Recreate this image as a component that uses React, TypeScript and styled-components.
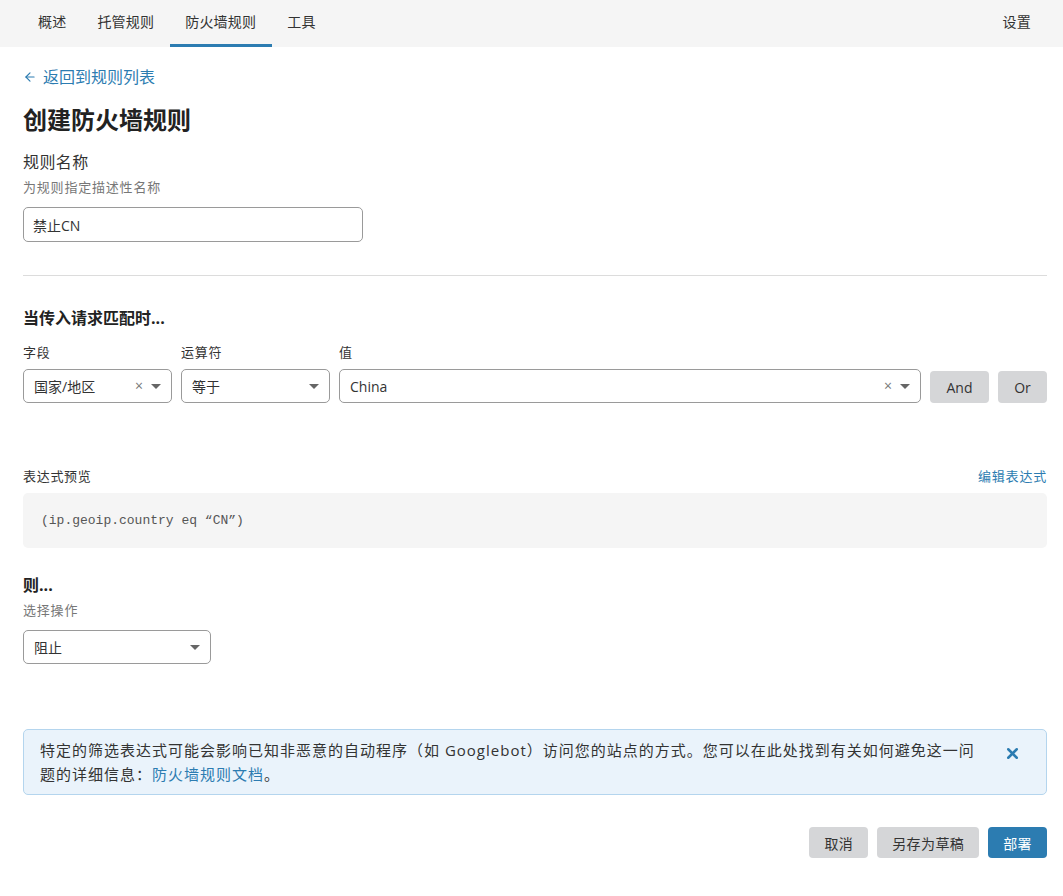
import styled, { createGlobalStyle } from "styled-components";
import { ArrowLeft, X } from "lucide-react";

const GlobalStyle = createGlobalStyle`
  body {
    margin: 0;
    background: #fff;
    color: #333;
    font-family: "Open Sans", "Noto Sans CJK SC", sans-serif;
  }
  * { box-sizing: border-box; }
`;

const NavBar = styled.nav`
  height: 47px;
  background: #f5f5f5;
  display: flex;
  align-items: stretch;
  padding: 0 16px 0 23px;
  font-size: 14px;
  letter-spacing: 0.2px;
`;

const Tab = styled.div<{ $active?: boolean }>`
  display: flex;
  align-items: center;
  padding: 3px 16px 6px 15px;
  color: #333;
  border-bottom: 3px solid ${(p) => (p.$active ? "#2c7cb1" : "transparent")};
`;

const Spacer = styled.div`
  flex: 1;
`;

const Main = styled.main`
  padding: 0 16px 40px 23px;
  display: flex;
  flex-direction: column;
`;

const BackLink = styled.a`
  margin-top: 19px;
  display: flex;
  align-items: center;
  gap: 6px;
  font-size: 16px;
  line-height: 22px;
  color: #2c7cb1;
  text-decoration: none;
`;

const Title = styled.h1`
  margin: 16px 0 0;
  font-size: 24px;
  line-height: 32px;
  font-weight: 700;
  color: #222;
`;

const FieldLabel = styled.div`
  margin-top: 15px;
  font-size: 16px;
  line-height: 22px;
  letter-spacing: 0.4px;
  color: #333;
`;

const Hint = styled.div<{ $top?: number }>`
  margin-top: ${(p) => p.$top ?? 5}px;
  font-size: 13px;
  line-height: 18px;
  letter-spacing: 0.8px;
  color: #777;
`;

const TextInput = styled.input`
  margin-top: 11px;
  width: 340px;
  height: 35px;
  padding: 0 9px;
  border: 1px solid #9a9a9a;
  border-radius: 5px;
  font: inherit;
  font-size: 14px;
  color: #333;
`;

const Divider = styled.hr`
  margin: 33px 0 0;
  border: none;
  border-top: 1px solid #dcdcdc;
`;

const SectionTitle = styled.h2<{ $top: number }>`
  margin: ${(p) => p.$top}px 0 0;
  font-size: 16px;
  line-height: 22px;
  font-weight: 700;
  color: #222;
`;

const FilterGrid = styled.div`
  margin-top: 14px;
  display: grid;
  grid-template-columns: 149px 149px 1fr 59px 49px;
  column-gap: 9px;
  row-gap: 8px;
  align-items: end;
`;

const SmallLabel = styled.div`
  font-size: 13px;
  line-height: 18px;
  letter-spacing: 0.7px;
  color: #333;
  align-self: start;
`;

const SelectBox = styled.div<{ $width?: number }>`
  height: 34px;
  width: ${(p) => (p.$width ? `${p.$width}px` : "auto")};
  border: 1px solid #9a9a9a;
  border-radius: 5px;
  display: flex;
  align-items: center;
  padding: 0 10px;
  font-size: 14px;
  color: #333;
  background: #fff;
`;

const SelectValue = styled.span`
  flex: 1;
`;

const Clear = styled.span`
  color: #777;
  font-size: 14px;
  margin-right: 8px;
  line-height: 1;
`;

const Caret = styled.span`
  width: 0;
  height: 0;
  border-left: 5px solid transparent;
  border-right: 5px solid transparent;
  border-top: 5px solid #666;
`;

const GrayButton = styled.button<{ $primary?: boolean }>`
  height: 32px;
  border: none;
  border-radius: 4px;
  padding: 0 16px;
  font: inherit;
  font-size: 14px;
  color: ${(p) => (p.$primary ? "#fff" : "#333")};
  background: ${(p) => (p.$primary ? "#2c7cb1" : "#d5d6d8")};
  cursor: pointer;
`;

const PreviewHeader = styled.div`
  margin-top: 64px;
  display: flex;
  justify-content: space-between;
  align-items: center;
`;

const EditLink = styled.a`
  font-size: 13px;
  line-height: 18px;
  letter-spacing: 0.8px;
  color: #2c7cb1;
`;

const CodeBlock = styled.pre`
  margin: 8px 0 0;
  height: 55px;
  background: #f5f5f5;
  border-radius: 5px;
  padding: 0 18px;
  display: flex;
  align-items: center;
  font-family: "Liberation Mono", "DejaVu Sans Mono", monospace;
  font-size: 13px;
  color: #555;
`;

const ActionSelect = styled(SelectBox)`
  margin-top: 11px;
`;

const Alert = styled.div`
  margin-top: 65px;
  background: #eaf3fb;
  border: 1px solid #b4d5ee;
  border-radius: 5px;
  padding: 8px 16px;
  display: flex;
  align-items: flex-start;
`;

const AlertText = styled.p`
  flex: 1;
  margin: 0;
  padding-right: 8px;
  font-size: 15px;
  line-height: 24px;
  letter-spacing: 1px;
  color: #333;
`;

const AlertLink = styled.a`
  color: #2c7cb1;
  text-decoration: none;
`;

const CloseButton = styled.button`
  margin: 7px 9px 0 13px;
  padding: 0;
  border: none;
  background: none;
  color: #2c7cb1;
  display: flex;
`;

const Footer = styled.div`
  margin-top: 32px;
  display: flex;
  justify-content: flex-end;
  gap: 9px;

  ${GrayButton} {
    height: 31px;
    padding: 0 15px;
    letter-spacing: 0.4px;
  }
`;

const App = () => {
  return (
    <>
      <GlobalStyle />
      <NavBar>
        <Tab>概述</Tab>
        <Tab>托管规则</Tab>
        <Tab $active>防火墙规则</Tab>
        <Tab>工具</Tab>
        <Spacer />
        <Tab>设置</Tab>
      </NavBar>
      <Main>
        <BackLink href="#">
          <ArrowLeft size={14} strokeWidth={2} />
          返回到规则列表
        </BackLink>
        <Title>创建防火墙规则</Title>
        <FieldLabel>规则名称</FieldLabel>
        <Hint>为规则指定描述性名称</Hint>
        <TextInput defaultValue="禁止CN" />
        <Divider />

        <SectionTitle $top={31}>当传入请求匹配时...</SectionTitle>
        <FilterGrid>
          <SmallLabel>字段</SmallLabel>
          <SmallLabel>运算符</SmallLabel>
          <SmallLabel>值</SmallLabel>
          <span />
          <span />
          <SelectBox>
            <SelectValue>国家/地区</SelectValue>
            <Clear>×</Clear>
            <Caret />
          </SelectBox>
          <SelectBox>
            <SelectValue>等于</SelectValue>
            <Caret />
          </SelectBox>
          <SelectBox>
            <SelectValue>China</SelectValue>
            <Clear>×</Clear>
            <Caret />
          </SelectBox>
          <GrayButton>And</GrayButton>
          <GrayButton>Or</GrayButton>
        </FilterGrid>

        <PreviewHeader>
          <SmallLabel>表达式预览</SmallLabel>
          <EditLink>编辑表达式</EditLink>
        </PreviewHeader>
        <CodeBlock>(ip.geoip.country eq “CN”)</CodeBlock>

        <SectionTitle $top={26}>则...</SectionTitle>
        <Hint>选择操作</Hint>
        <ActionSelect $width={188}>
          <SelectValue>阻止</SelectValue>
          <Caret />
        </ActionSelect>

        <Alert>
          <AlertText>
            特定的筛选表达式可能会影响已知非恶意的自动程序（如 Googlebot）访问您的站点的方式。您可以在此处找到有关如何避免这一问题的详细信息：
            <AlertLink href="#">防火墙规则文档</AlertLink>。
          </AlertText>
          <CloseButton aria-label="关闭">
            <X size={17} strokeWidth={3.5} />
          </CloseButton>
        </Alert>

        <Footer>
          <GrayButton>取消</GrayButton>
          <GrayButton>另存为草稿</GrayButton>
          <GrayButton $primary>部署</GrayButton>
        </Footer>
      </Main>
    </>
  );
};

export default App;
